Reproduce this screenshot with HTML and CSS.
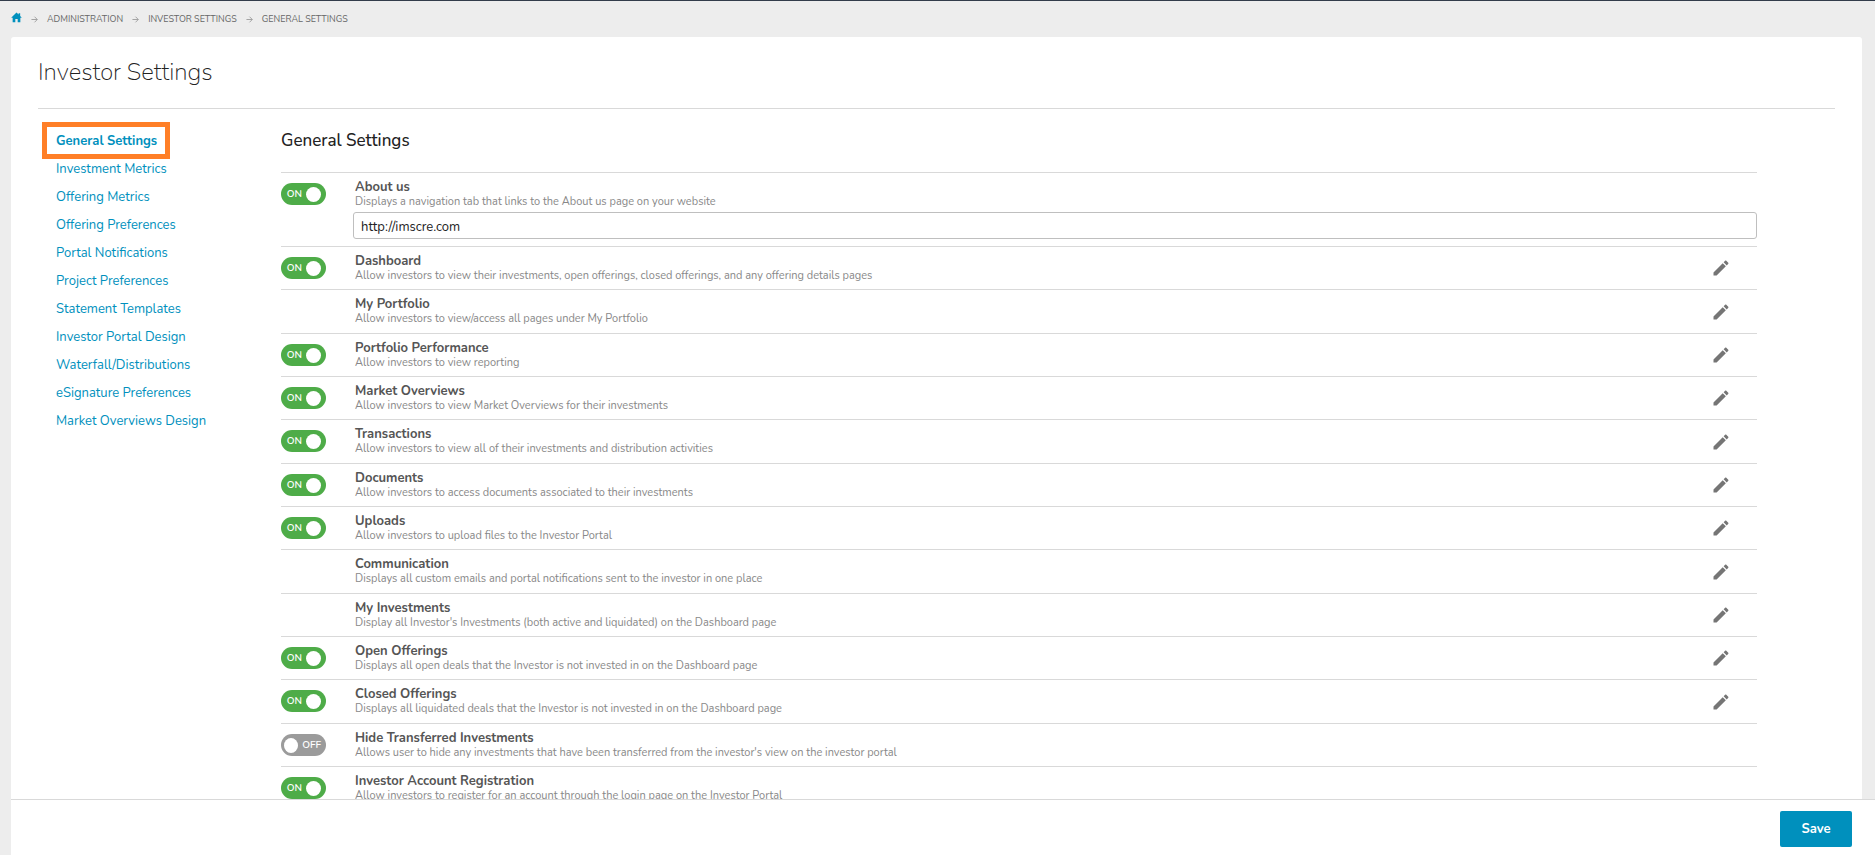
FILE: index.html
```html
<!DOCTYPE html>
<html lang="en">
<head>
  <meta charset="UTF-8">
  <meta name="viewport" content="width=device-width, initial-scale=1.0">
  <title>Investor Settings</title>
  <link rel="stylesheet" href="styles.css">
</head>
<body>
  <!-- icons used more than once -->
  <svg class="sprite" aria-hidden="true">
    <symbol id="arrow" viewBox="0 0 8 8">
      <path d="M0.5 4H7M4 0.8L7.2 4L4 7.2" fill="none" stroke="currentColor" stroke-width="1"/>
    </symbol>
    <symbol id="pencil" viewBox="0 0 24 24">
      <path d="M3 17.25V21h3.75L17.81 9.94l-3.75-3.75L3 17.25zM20.71 7.04c.39-.39.39-1.02 0-1.41l-2.34-2.34c-.39-.39-1.02-.39-1.41 0l-1.83 1.83 3.75 3.75 1.83-1.83z" fill="currentColor"/>
    </symbol>
  </svg>

  <nav class="breadcrumb" aria-label="Breadcrumb">
    <a class="home" href="#" aria-label="Home">
      <svg viewBox="0 0 12 12"><path d="M6 0.5L0.2 6.2H1.8V11.2H4.7V7.6H7.3V11.2H10.2V6.2H11.8L10 4.4V1.4H8.3V2.8Z" fill="currentColor"/></svg>
    </a>
    <svg class="arrow"><use href="#arrow"/></svg>
    <a href="#">ADMINISTRATION</a>
    <svg class="arrow"><use href="#arrow"/></svg>
    <a href="#">INVESTOR SETTINGS</a>
    <svg class="arrow"><use href="#arrow"/></svg>
    <a href="#">GENERAL SETTINGS</a>
  </nav>

  <main class="card">
    <h1>Investor Settings</h1>
    <div class="layout">
      <nav class="side-menu" aria-label="Settings sections">
        <a class="active" href="#">General Settings</a>
        <a href="#">Investment Metrics</a>
        <a href="#">Offering Metrics</a>
        <a href="#">Offering Preferences</a>
        <a href="#">Portal Notifications</a>
        <a href="#">Project Preferences</a>
        <a href="#">Statement Templates</a>
        <a href="#">Investor Portal Design</a>
        <a href="#">Waterfall/Distributions</a>
        <a href="#">eSignature Preferences</a>
        <a href="#">Market Overviews Design</a>
      </nav>

      <section class="content">
        <h2>General Settings</h2>
        <ul class="settings">
          <li>
            <label class="toggle"><input type="checkbox" aria-labelledby="s-about" checked><span>ON</span></label>
            <div class="text">
              <h3 id="s-about">About us</h3>
              <p>Displays a navigation tab that links to the About us page on your website</p>
              <input class="url" type="text" aria-labelledby="s-about" value="http://imscre.com">
            </div>
          </li>
          <li>
            <label class="toggle"><input type="checkbox" aria-labelledby="s-dashboard" checked><span>ON</span></label>
            <div class="text">
              <h3 id="s-dashboard">Dashboard</h3>
              <p>Allow investors to view their investments, open offerings, closed offerings, and any offering details pages</p>
            </div>
            <button class="edit" aria-label="Edit Dashboard"><svg><use href="#pencil"/></svg></button>
          </li>
          <li>
            <div class="text">
              <h3>My Portfolio</h3>
              <p>Allow investors to view/access all pages under My Portfolio</p>
            </div>
            <button class="edit" aria-label="Edit My Portfolio"><svg><use href="#pencil"/></svg></button>
          </li>
          <li>
            <label class="toggle"><input type="checkbox" aria-labelledby="s-performance" checked><span>ON</span></label>
            <div class="text">
              <h3 id="s-performance">Portfolio Performance</h3>
              <p>Allow investors to view reporting</p>
            </div>
            <button class="edit" aria-label="Edit Portfolio Performance"><svg><use href="#pencil"/></svg></button>
          </li>
          <li>
            <label class="toggle"><input type="checkbox" aria-labelledby="s-market" checked><span>ON</span></label>
            <div class="text">
              <h3 id="s-market">Market Overviews</h3>
              <p>Allow investors to view Market Overviews for their investments</p>
            </div>
            <button class="edit" aria-label="Edit Market Overviews"><svg><use href="#pencil"/></svg></button>
          </li>
          <li>
            <label class="toggle"><input type="checkbox" aria-labelledby="s-transactions" checked><span>ON</span></label>
            <div class="text">
              <h3 id="s-transactions">Transactions</h3>
              <p>Allow investors to view all of their investments and distribution activities</p>
            </div>
            <button class="edit" aria-label="Edit Transactions"><svg><use href="#pencil"/></svg></button>
          </li>
          <li>
            <label class="toggle"><input type="checkbox" aria-labelledby="s-documents" checked><span>ON</span></label>
            <div class="text">
              <h3 id="s-documents">Documents</h3>
              <p>Allow investors to access documents associated to their investments</p>
            </div>
            <button class="edit" aria-label="Edit Documents"><svg><use href="#pencil"/></svg></button>
          </li>
          <li>
            <label class="toggle"><input type="checkbox" aria-labelledby="s-uploads" checked><span>ON</span></label>
            <div class="text">
              <h3 id="s-uploads">Uploads</h3>
              <p>Allow investors to upload files to the Investor Portal</p>
            </div>
            <button class="edit" aria-label="Edit Uploads"><svg><use href="#pencil"/></svg></button>
          </li>
          <li>
            <div class="text">
              <h3>Communication</h3>
              <p>Displays all custom emails and portal notifications sent to the investor in one place</p>
            </div>
            <button class="edit" aria-label="Edit Communication"><svg><use href="#pencil"/></svg></button>
          </li>
          <li>
            <div class="text">
              <h3>My Investments</h3>
              <p>Display all Investor's Investments (both active and liquidated) on the Dashboard page</p>
            </div>
            <button class="edit" aria-label="Edit My Investments"><svg><use href="#pencil"/></svg></button>
          </li>
          <li>
            <label class="toggle"><input type="checkbox" aria-labelledby="s-open" checked><span>ON</span></label>
            <div class="text">
              <h3 id="s-open">Open Offerings</h3>
              <p>Displays all open deals that the Investor is not invested in on the Dashboard page</p>
            </div>
            <button class="edit" aria-label="Edit Open Offerings"><svg><use href="#pencil"/></svg></button>
          </li>
          <li>
            <label class="toggle"><input type="checkbox" aria-labelledby="s-closed" checked><span>ON</span></label>
            <div class="text">
              <h3 id="s-closed">Closed Offerings</h3>
              <p>Displays all liquidated deals that the Investor is not invested in on the Dashboard page</p>
            </div>
            <button class="edit" aria-label="Edit Closed Offerings"><svg><use href="#pencil"/></svg></button>
          </li>
          <li>
            <label class="toggle"><input type="checkbox" aria-labelledby="s-transferred"><span>OFF</span></label>
            <div class="text">
              <h3 id="s-transferred">Hide Transferred Investments</h3>
              <p>Allows user to hide any investments that have been transferred from the investor's view on the investor portal</p>
            </div>
          </li>
          <li>
            <label class="toggle"><input type="checkbox" aria-labelledby="s-registration" checked><span>ON</span></label>
            <div class="text">
              <h3 id="s-registration">Investor Account Registration</h3>
              <p>Allow investors to register for an account through the login page on the Investor Portal</p>
            </div>
          </li>
        </ul>
      </section>
    </div>
  </main>

  <footer class="actions">
    <button class="save">Save</button>
  </footer>

  <script>
    // keep the ON/OFF caption in step with the checkbox
    document.querySelectorAll('.toggle input').forEach(box => {
      box.addEventListener('change', () => {
        box.nextElementSibling.textContent = box.checked ? 'ON' : 'OFF';
      });
    });
  </script>
</body>
</html>
```
FILE: styles.css
```css
* {
  box-sizing: border-box;
  margin: 0;
  padding: 0;
}
body {
  min-height: 100vh;
  display: flex;
  flex-direction: column;
  border-top: 1px solid #323c4b;
  background: #ededed;
  color: #222;
  font-family: Nunito, Lato, sans-serif;
  font-size: 13px;
}
a {
  color: #0090bd;
  text-decoration: none;
}
a:hover {
  text-decoration: underline;
}
.sprite {
  position: absolute;
  width: 0;
  height: 0;
}

/* breadcrumb */
.breadcrumb {
  display: flex;
  align-items: center;
  gap: 9px;
  height: 36px;
  padding: 0 11px;
  font-size: 9px;
}
.breadcrumb a {
  color: #666;
}
.breadcrumb .home {
  width: 11px;
  height: 14px;
  color: #0090bd;
}
.home svg {
  display: block;
  width: 11px;
  height: 11px;
}
.arrow {
  width: 7px;
  height: 7px;
  color: #999;
}

/* main card */
.card {
  flex: 1;
  margin: 0 13px 0 11px;
  padding: 0 27px;
  border-radius: 3px 3px 0 0;
  background: #fff;
}
h1 {
  height: 72px;
  border-bottom: 1px solid #d9d9d9;
  font-size: 24px;
  font-weight: 200;
  line-height: 70px;
}
.layout {
  display: flex;
}
.side-menu {
  display: flex;
  flex-direction: column;
  align-items: flex-start;
  width: 243px;
  padding: 18px 18px 0;
}
.side-menu a {
  position: relative;
  line-height: 28px;
}
.side-menu .active {
  font-weight: 700;
}
/* highlight frame, drawn over the gaps round the link */
.active::after {
  content: "";
  position: absolute;
  inset: -5px -13px -4px -14px;
  border: 5px solid #ff7f27;
}

.content {
  flex: 1;
  margin-right: 78px;
}
h2 {
  height: 63px;
  font-size: 17px;
  font-weight: 500;
  line-height: 64px;
}

/* settings list */
.settings {
  list-style: none;
}
.settings li {
  display: flex;
  min-height: 43px;
  padding-left: 72px;
  border-top: 1px solid #d9d9d9;
}
.settings li:nth-child(3n) {
  min-height: 44px;
}
.toggle {
  width: 72px;
  margin-left: -72px;
  padding-top: 10px;
  position: relative;
  cursor: pointer;
}
.toggle input {
  position: absolute;
  opacity: 0;
}
.toggle span {
  display: flex;
  align-items: center;
  justify-content: flex-end;
  gap: 4px;
  width: 45px;
  height: 22px;
  padding: 0 5px 0 3px;
  border-radius: 11px;
  background: #9b9b9b;
  color: #fff;
  font-size: 10px;
  font-weight: 600;
}
.toggle span::before {
  content: "";
  width: 15px;
  height: 15px;
  border-radius: 50%;
  background: #fff;
}
.toggle input:checked + span {
  flex-direction: row-reverse;
  justify-content: flex-start;
  background: #4eac48;
}
.toggle input:focus-visible + span {
  outline: 2px solid #0090bd;
}
.text {
  flex: 1;
  padding: 6px 0 7px 2px;
}
h3 {
  color: #555;
  font-size: 13px;
  font-weight: 700;
  line-height: 16px;
}
.text p {
  color: #888;
  font-size: 11px;
  line-height: 13px;
}
.url {
  display: block;
  width: calc(100% + 2px);
  height: 27px;
  margin: 4px 0 0 -2px;
  padding: 2px 7px 0;
  border: 1px solid #bfbfbf;
  border-radius: 3px;
  color: #222;
  font: inherit;
}
.edit {
  align-self: center;
  width: 20px;
  height: 20px;
  margin-right: 26px;
  border: 0;
  background: none;
  color: #757575;
  cursor: pointer;
}
.edit svg {
  display: block;
  width: 20px;
  height: 20px;
}

/* bottom bar */
.actions {
  position: fixed;
  right: 0;
  bottom: 0;
  left: 11px;
  display: flex;
  justify-content: flex-end;
  padding: 11px 23px 8px;
  border-top: 1px solid #d9d9d9;
  background: #fff;
}
.save {
  width: 72px;
  height: 36px;
  border: 0;
  border-radius: 2px;
  background: #0090bd;
  color: #fff;
  font: inherit;
  font-weight: 700;
  cursor: pointer;
}
```
